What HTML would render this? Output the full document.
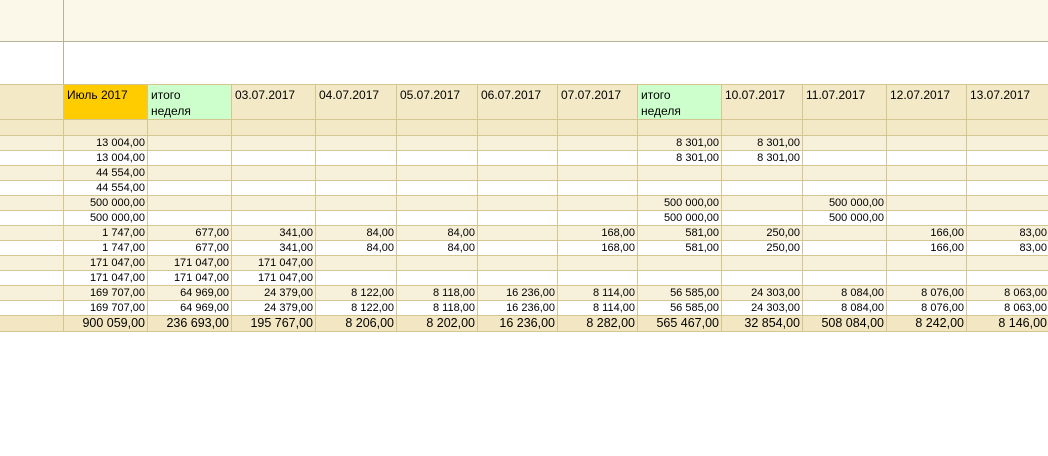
<!DOCTYPE html>
<html><head><meta charset="utf-8"><style>
*{margin:0;padding:0;box-sizing:border-box}
body{width:1048px;height:456px;background:#fff;position:relative;overflow:hidden;font-family:"Liberation Sans",Arial,sans-serif}
#top{position:absolute;left:0;top:0;width:1048px;height:42px;background:#fbf8ea;border-bottom:1px solid #b8b29a}
#vl{position:absolute;left:63px;top:0;width:1px;height:84px;background:#b8b29a}
table{position:absolute;left:-1px;top:84px;border-collapse:collapse;table-layout:fixed;width:1050px}
td{border:1px solid #d4c690;font-size:11px;color:#000;text-align:right;padding:0 2px 0 0;height:15px;line-height:13px;white-space:nowrap;overflow:hidden}
tr.h td{height:34px;background:#f3e9c6;text-align:left;vertical-align:top;font-size:12px;padding:2px 0 0 3px;line-height:16px}
tr.s td{height:16px;background:#f3e9c6}
tr.o td{background:#f7f0da}
tr.w td{background:#fff}
tr.t td{background:#f3e7c3;font-size:12.5px;height:16px;line-height:15px}
td.y{background:#ffcc00!important}
td.g{background:#ccffcc!important}
</style></head><body>
<div id="top"></div><div id="vl"></div>
<table>
<colgroup><col style="width:64px"><col style="width:84px"><col style="width:84px"><col style="width:84px"><col style="width:81px"><col style="width:81px"><col style="width:80px"><col style="width:80px"><col style="width:84px"><col style="width:81px"><col style="width:84px"><col style="width:80px"><col style="width:83px"></colgroup>
<tr class="h"><td></td><td class="y">Июль 2017</td><td class="g">итого<br>неделя</td><td>03.07.2017</td><td>04.07.2017</td><td>05.07.2017</td><td>06.07.2017</td><td>07.07.2017</td><td class="g">итого<br>неделя</td><td>10.07.2017</td><td>11.07.2017</td><td>12.07.2017</td><td>13.07.2017</td></tr>
<tr class="s"><td></td><td></td><td></td><td></td><td></td><td></td><td></td><td></td><td></td><td></td><td></td><td></td><td></td></tr>
<tr class="o"><td></td><td>13 004,00</td><td></td><td></td><td></td><td></td><td></td><td></td><td>8 301,00</td><td>8 301,00</td><td></td><td></td><td></td></tr>
<tr class="w"><td></td><td>13 004,00</td><td></td><td></td><td></td><td></td><td></td><td></td><td>8 301,00</td><td>8 301,00</td><td></td><td></td><td></td></tr>
<tr class="o"><td></td><td>44 554,00</td><td></td><td></td><td></td><td></td><td></td><td></td><td></td><td></td><td></td><td></td><td></td></tr>
<tr class="w"><td></td><td>44 554,00</td><td></td><td></td><td></td><td></td><td></td><td></td><td></td><td></td><td></td><td></td><td></td></tr>
<tr class="o"><td></td><td>500 000,00</td><td></td><td></td><td></td><td></td><td></td><td></td><td>500 000,00</td><td></td><td>500 000,00</td><td></td><td></td></tr>
<tr class="w"><td></td><td>500 000,00</td><td></td><td></td><td></td><td></td><td></td><td></td><td>500 000,00</td><td></td><td>500 000,00</td><td></td><td></td></tr>
<tr class="o"><td></td><td>1 747,00</td><td>677,00</td><td>341,00</td><td>84,00</td><td>84,00</td><td></td><td>168,00</td><td>581,00</td><td>250,00</td><td></td><td>166,00</td><td>83,00</td></tr>
<tr class="w"><td></td><td>1 747,00</td><td>677,00</td><td>341,00</td><td>84,00</td><td>84,00</td><td></td><td>168,00</td><td>581,00</td><td>250,00</td><td></td><td>166,00</td><td>83,00</td></tr>
<tr class="o"><td></td><td>171 047,00</td><td>171 047,00</td><td>171 047,00</td><td></td><td></td><td></td><td></td><td></td><td></td><td></td><td></td><td></td></tr>
<tr class="w"><td></td><td>171 047,00</td><td>171 047,00</td><td>171 047,00</td><td></td><td></td><td></td><td></td><td></td><td></td><td></td><td></td><td></td></tr>
<tr class="o"><td></td><td>169 707,00</td><td>64 969,00</td><td>24 379,00</td><td>8 122,00</td><td>8 118,00</td><td>16 236,00</td><td>8 114,00</td><td>56 585,00</td><td>24 303,00</td><td>8 084,00</td><td>8 076,00</td><td>8 063,00</td></tr>
<tr class="w"><td></td><td>169 707,00</td><td>64 969,00</td><td>24 379,00</td><td>8 122,00</td><td>8 118,00</td><td>16 236,00</td><td>8 114,00</td><td>56 585,00</td><td>24 303,00</td><td>8 084,00</td><td>8 076,00</td><td>8 063,00</td></tr>
<tr class="t"><td></td><td>900 059,00</td><td>236 693,00</td><td>195 767,00</td><td>8 206,00</td><td>8 202,00</td><td>16 236,00</td><td>8 282,00</td><td>565 467,00</td><td>32 854,00</td><td>508 084,00</td><td>8 242,00</td><td>8 146,00</td></tr>
</table>
</body></html>
